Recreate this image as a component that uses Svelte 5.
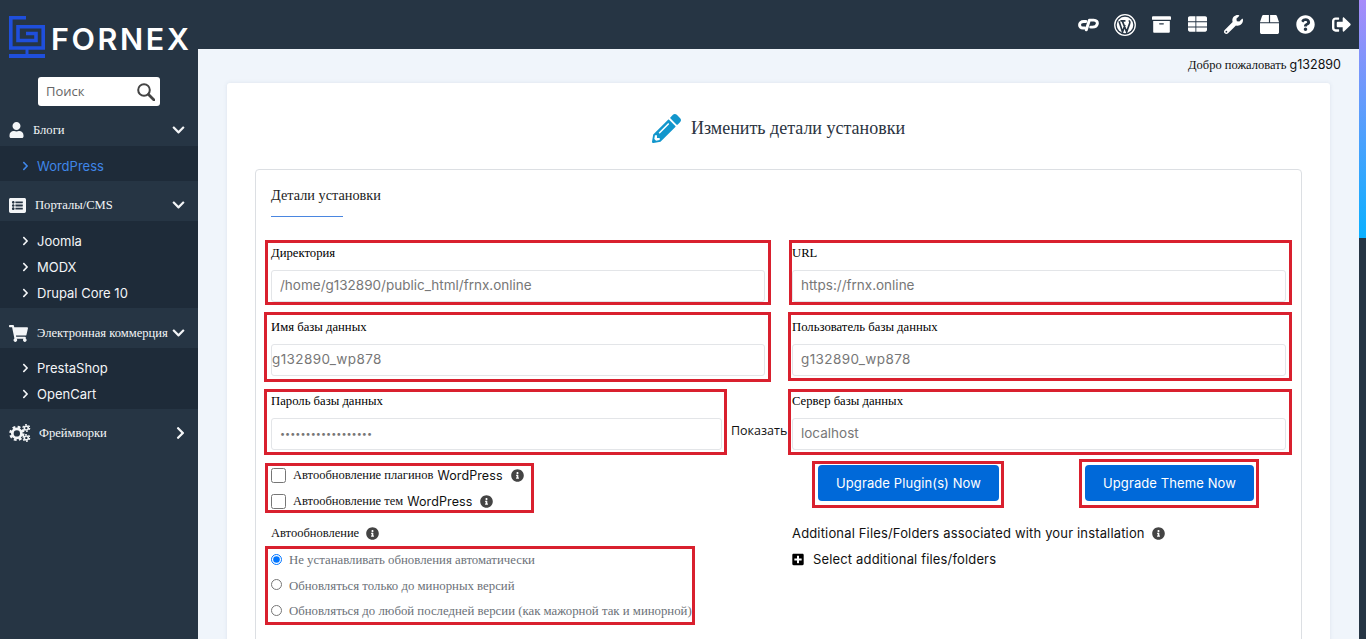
<script>
    // paths for the menu and toolbar icons
    const icons = {
        user: ["0 0 448 512", "M224 256c70.7 0 128-57.3 128-128S294.7 0 224 0 96 57.3 96 128s57.3 128 128 128zm89.6 32h-16.7c-22.2 10.2-46.9 16-72.9 16s-50.6-5.8-72.9-16h-16.7C60.2 288 0 348.2 0 422.4V464c0 26.5 21.5 48 48 48h352c26.5 0 48-21.5 48-48v-41.6c0-74.2-60.2-134.4-134.4-134.4z"],
        list: ["0 0 512 512", "M464 480H48c-26.51 0-48-21.49-48-48V80c0-26.51 21.49-48 48-48h416c26.51 0 48 21.49 48 48v352c0 26.51-21.49 48-48 48zM128 120c-22.091 0-40 17.909-40 40s17.909 40 40 40 40-17.909 40-40-17.909-40-40-40zm0 96c-22.091 0-40 17.909-40 40s17.909 40 40 40 40-17.909 40-40-17.909-40-40-40zm0 96c-22.091 0-40 17.909-40 40s17.909 40 40 40 40-17.909 40-40-17.909-40-40-40zm288-136v-32c0-6.627-5.373-12-12-12H204c-6.627 0-12 5.373-12 12v32c0 6.627 5.373 12 12 12h200c6.627 0 12-5.373 12-12zm0 96v-32c0-6.627-5.373-12-12-12H204c-6.627 0-12 5.373-12 12v32c0 6.627 5.373 12 12 12h200c6.627 0 12-5.373 12-12zm0 96v-32c0-6.627-5.373-12-12-12H204c-6.627 0-12 5.373-12 12v32c0 6.627 5.373 12 12 12h200c6.627 0 12-5.373 12-12z"],
        cart: ["0 0 576 512", "M528.12 301.319l47.273-208C578.806 78.301 567.391 64 551.99 64H159.208l-9.166-44.81C147.758 8.021 137.93 0 126.529 0H24C10.745 0 0 10.745 0 24v16c0 13.255 10.745 24 24 24h69.883l70.248 343.435C147.325 417.1 136 435.222 136 456c0 30.928 25.072 56 56 56s56-25.072 56-56c0-15.674-6.447-29.835-16.824-40h209.647C430.447 426.165 424 440.326 424 456c0 30.928 25.072 56 56 56s56-25.072 56-56c0-22.172-12.888-41.332-31.579-50.405l5.517-24.276c3.413-15.018-8.002-29.319-23.403-29.319H218.117l-6.545-32h293.145c11.206 0 20.92-7.754 23.403-18.681z"],
        down: ["0 0 448 512", "M207.029 381.476L12.686 187.132c-9.373-9.373-9.373-24.569 0-33.941l22.667-22.667c9.357-9.357 24.522-9.375 33.901-.04L224 284.505l154.745-154.021c9.379-9.335 24.544-9.317 33.901.04l22.667 22.667c9.373 9.373 9.373 24.569 0 33.941L240.971 381.476c-9.373 9.372-24.569 9.372-33.942 0z"],
        right: ["0 0 320 512", "M285.476 272.971L91.132 467.314c-9.373 9.373-24.569 9.373-33.941 0l-22.667-22.667c-9.357-9.357-9.375-24.522-.04-33.901L188.505 256 34.484 101.255c-9.335-9.379-9.317-24.544.04-33.901l22.667-22.667c9.373-9.373 24.569-9.373 33.941 0L285.475 239.03c9.373 9.372 9.373 24.568.001 33.941z"],
        info: ["0 0 512 512", "M256 8C119.043 8 8 119.083 8 256c0 136.997 111.043 248 248 248s248-111.003 248-248C504 119.083 392.957 8 256 8zm0 110c23.196 0 42 18.804 42 42s-18.804 42-42 42-42-18.804-42-42 18.804-42 42-42zm56 254c0 6.627-5.373 12-12 12h-88c-6.627 0-12-5.373-12-12v-24c0-6.627 5.373-12 12-12h12v-64h-12c-6.627 0-12-5.373-12-12v-24c0-6.627 5.373-12 12-12h64c6.627 0 12 5.373 12 12v100h12c6.627 0 12 5.373 12 12v24z"],
        archive: ["0 0 512 512", "M32 448c0 17.7 14.3 32 32 32h384c17.7 0 32-14.3 32-32V160H32v288zm160-212c0-6.6 5.4-12 12-12h104c6.6 0 12 5.4 12 12v8c0 6.6-5.4 12-12 12H204c-6.6 0-12-5.4-12-12v-8zM480 32H32C14.3 32 0 46.3 0 64v48c0 8.8 7.2 16 16 16h480c8.8 0 16-7.2 16-16V64c0-17.7-14.3-32-32-32z"],
        table: ["0 0 512 512", "M48 32h152v136H0V80c0-26.5 21.500-48 48-48zM224 32h240c26.500 0 48 21.500 48 48v88H224V32zM0 192h200v120H0V192zM224 192h288v120H224V192zM0 336h200v112H48c-26.500 0-48-21.500-48-48v-64zM224 336h288v64c0 26.500-21.500 48-48 48H224V336z"],
        wrench: ["0 0 512 512", "M507.73 109.1c-2.24-9.03-13.54-12.09-20.12-5.51l-74.36 74.36-67.88-11.31-11.31-67.88 74.36-74.36c6.62-6.62 3.43-17.9-5.66-20.16-47.38-11.74-99.55.91-136.58 37.93-39.64 39.64-50.55 97.1-34.05 147.2L18.74 402.76c-24.99 24.99-24.99 65.51 0 90.5 24.99 24.99 65.51 24.99 90.5 0l213.21-213.21c50.12 16.71 107.47 5.68 147.37-34.22 37.07-37.07 49.7-89.32 37.91-136.73zM64 472c-13.25 0-24-10.75-24-24 0-13.26 10.75-24 24-24s24 10.74 24 24c0 13.25-10.75 24-24 24z"],
        box: ["0 0 512 512", "M509.5 184.6L458.9 32.8C452.4 13.2 434.1 0 413.4 0H272v192h238.7c-.4-2.5-.4-5-1.2-7.4zM240 0H98.6c-20.7 0-39 13.2-45.5 32.8L2.5 184.6c-.8 2.4-.8 4.9-1.2 7.4H240V0zM0 224v240c0 26.5 21.5 48 48 48h416c26.5 0 48-21.5 48-48V224H0z"],
        question: ["0 0 512 512", "M504 256c0 136.997-111.043 248-248 248S8 392.997 8 256C8 119.083 119.043 8 256 8s248 111.083 248 248zM262.655 90c-54.497 0-89.255 22.957-116.549 63.758-3.536 5.286-2.353 12.415 2.715 16.258l34.699 26.31c5.205 3.947 12.621 3.008 16.665-2.122 17.864-22.658 30.113-35.797 57.303-35.797 20.429 0 45.698 13.148 45.698 32.958 0 14.976-12.363 22.667-32.534 33.976C247.128 238.528 216 254.941 216 296v4c0 6.627 5.373 12 12 12h56c6.627 0 12-5.373 12-12v-1.333c0-28.462 83.186-29.647 83.186-106.667 0-58.002-60.165-102-116.531-102zM256 338c-25.365 0-46 20.635-46 46 0 25.364 20.635 46 46 46s46-20.636 46-46c0-25.365-20.635-46-46-46z"],
        signout: ["0 0 512 512", "M497 273L329 441c-15 15-41 4.5-41-17v-96H152c-13.3 0-24-10.7-24-24v-96c0-13.3 10.7-24 24-24h136V88c0-21.4 25.9-32 41-17l168 168c9.3 9.4 9.3 24.6 0 34zM192 436v-40c0-6.6-5.4-12-12-12H96c-17.7 0-32-14.3-32-32V160c0-17.7 14.3-32 32-32h84c6.6 0 12-5.4 12-12V76c0-6.6-5.4-12-12-12H96c-53 0-96 43-96 96v192c0 53 43 96 96 96h84c6.6 0 12-5.4 12-12z"],
        pencil: ["0 0 512 512", "M497.9 142.1l-46.1 46.1c-4.7 4.7-12.3 4.7-17 0l-111-111c-4.7-4.7-4.7-12.3 0-17l46.1-46.1c18.7-18.7 49.1-18.7 67.9 0l60.1 60.1c18.8 18.7 18.8 49.1 0 67.9zM284.2 99.8L21.6 362.4.4 483.9c-2.9 16.4 11.4 30.6 27.8 27.8l121.5-21.3 262.6-262.6c4.7-4.7 4.7-12.3 0-17l-111-111c-4.8-4.7-12.4-4.7-17.1 0zM124.1 339.9c-5.5-5.5-5.5-14.3 0-19.8l154-154c5.5-5.5 14.3-5.5 19.8 0s5.5 14.3 0 19.8l-154 154c-5.5 5.5-14.3 5.5-19.8 0zM88 424h48v36.3l-64.5 11.3-31.1-31.1L51.7 376H88v48z"],
        plus: ["0 0 448 512", "M400 32H48C21.5 32 0 53.5 0 80v352c0 26.5 21.5 48 48 48h352c26.5 0 48-21.5 48-48V80c0-26.5-21.5-48-48-48zm-32 252c0 6.6-5.4 12-12 12h-92v92c0 6.6-5.4 12-12 12h-56c-6.6 0-12-5.4-12-12v-92H92c-6.6 0-12-5.4-12-12v-56c0-6.6 5.4-12 12-12h92v-92c0-6.6 5.4-12 12-12h56c6.6 0 12 5.4 12 12v92h92c6.6 0 12 5.4 12 12v56z"]
    };

    const menu = [
        { title: "Блоги", icon: "user", items: ["WordPress"], active: "WordPress" },
        { title: "Порталы/CMS", icon: "list", items: ["Joomla", "MODX", "Drupal Core 10"] },
        { title: "Электронная коммерция", icon: "cart", items: ["PrestaShop", "OpenCart"] },
        { title: "Фреймворки", icon: "cogs", items: [] }
    ];

    const toolbar = ["archive", "table", "wrench", "box", "question", "signout"];

    // annotation frames drawn over the form: left, top, right, bottom
    const frames = [
        [265, 240, 771, 305], [789, 240, 1292, 305],
        [264, 312, 771, 382], [788, 312, 1292, 381],
        [264, 389, 727, 455], [788, 389, 1292, 455],
        [265, 463, 534, 513], [265, 546, 695, 625],
        [812, 461, 1004, 508], [1079, 459, 1259, 508]
    ];
</script>

{#snippet fa(name, cls)}
    <svg class={cls} viewBox={icons[name][0]} aria-hidden="true"><path fill="currentColor" d={icons[name][1]} /></svg>
{/snippet}

<div class="page">
    <aside class="sidebar">
        <div class="logo">
            <svg class="logo-mark" viewBox="0 0 36 42" aria-hidden="true">
                <path d="M17 1.800H1.800V32H34.200V10.800H9V24.500H27V17.500H17" fill="none" stroke="#1f4fdc" stroke-width="3.600" />
                <path d="M18 32V38" stroke="#1f4fdc" stroke-width="3" />
                <path d="M0 40H36" stroke="#1f4fdc" stroke-width="4" />
            </svg>
            <span class="logo-text">FORNEX</span>
        </div>

        <div class="search">
            <span>Поиск</span>
            <svg class="search-icon" viewBox="0 0 18 18" aria-hidden="true">
                <circle cx="7" cy="7" r="5.800" fill="none" stroke="currentColor" stroke-width="2" />
                <path d="M11.500 11.500L17 17" stroke="currentColor" stroke-width="2.800" stroke-linecap="round" />
            </svg>
        </div>

        {#each menu as group}
            <div class="group-title" class:tall={group.icon === "cart"}>
                {#if group.icon === "cogs"}
                    <svg class="group-icon cogs" viewBox="0 0 24 20" aria-hidden="true">
                        <circle cx="8.500" cy="10.500" r="5" fill="none" stroke="currentColor" stroke-width="3" />
                        <circle cx="8.500" cy="10.500" r="7" fill="none" stroke="currentColor" stroke-width="3" stroke-dasharray="3 2.500" />
                        <circle cx="19" cy="4.500" r="2.200" fill="none" stroke="currentColor" stroke-width="1.800" />
                        <circle cx="19" cy="4.500" r="3.700" fill="none" stroke="currentColor" stroke-width="1.500" stroke-dasharray="2 1.900" />
                        <circle cx="19" cy="15.500" r="2.200" fill="none" stroke="currentColor" stroke-width="1.800" />
                        <circle cx="19" cy="15.500" r="3.700" fill="none" stroke="currentColor" stroke-width="1.500" stroke-dasharray="2 1.900" />
                    </svg>
                {:else}
                    {@render fa(group.icon, "group-icon " + group.icon)}
                {/if}
                <span class="group-name">{group.title}</span>
                {@render fa(group.items.length ? "down" : "right", group.items.length ? "caret" : "caret side")}
            </div>
            {#if group.items.length}
                <ul class="sub">
                    {#each group.items as item}
                        <li class:active={item === group.active}>
                            {@render fa("right", "sub-arrow")}
                            <span>{item}</span>
                        </li>
                    {/each}
                </ul>
            {/if}
        {/each}
    </aside>

    <div class="right">
        <header class="topbar">
            <svg class="tool cp" viewBox="0 0 24 16" aria-hidden="true">
                <path d="M9 4.500H6.500C3.500 4.500 1.800 6.500 1.800 8.500S3.300 12 5.500 12H7.500" fill="none" stroke="currentColor" stroke-width="3.400" stroke-linecap="round" />
                <path d="M9.500 14L13 3H18C21 3 22.500 5 22 7.500S19 11 16.500 11H14.500" fill="none" stroke="currentColor" stroke-width="3.400" stroke-linecap="round" stroke-linejoin="round" />
            </svg>
            <svg class="tool wp" viewBox="0 0 24 24" aria-hidden="true">
                <circle cx="12" cy="12" r="11.200" fill="none" stroke="currentColor" stroke-width="1.400" />
                <circle cx="12" cy="12" r="9" fill="currentColor" />
                <path d="M5.500 8L9.300 19.500L12 12M9 7.500L13.800 19.500L17 10.500C17.800 8.500 17 7.500 16 7.500M7 7.500H12.500" fill="none" stroke="#263544" stroke-width="1.800" />
            </svg>
            {#each toolbar as name}
                {@render fa(name, "tool")}
            {/each}
        </header>

        <main class="content">
            <p class="welcome"><span class="serif">Добро пожаловать</span> <span class="sans">g132890</span></p>

            <section class="card">
                <h1 class="title">
                    {@render fa("pencil", "title-icon")}
                    <span>Изменить детали установки</span>
                </h1>

                <div class="panel">
                    <h2 class="panel-title">Детали установки</h2>

                    <div class="row">
                        <div class="field">
                            <label for="dir">Директория</label>
                            <input id="dir" readonly value="/home/g132890/public_html/frnx.online" />
                        </div>
                        <div class="field">
                            <label for="url">URL</label>
                            <input id="url" readonly value="https://frnx.online" />
                        </div>
                    </div>
                    <div class="row">
                        <div class="field">
                            <label for="dbname">Имя базы данных</label>
                            <input id="dbname" class="db flush" readonly value="g132890_wp878" />
                        </div>
                        <div class="field">
                            <label for="dbuser">Пользователь базы данных</label>
                            <input id="dbuser" class="db" readonly value="g132890_wp878" />
                        </div>
                    </div>
                    <div class="row">
                        <div class="field last">
                            <label for="dbpass">Пароль базы данных</label>
                            <div class="pass">
                                <input id="dbpass" type="password" readonly value="xxxxxxxxxxxxxxxxxx" />
                                <span class="show">Показать</span>
                            </div>
                        </div>
                        <div class="field last">
                            <label for="dbhost">Сервер базы данных</label>
                            <input id="dbhost" readonly value="localhost" />
                        </div>
                    </div>

                    <div class="row updates">
                        <div class="checks">
                            <label class="check">
                                <input type="checkbox" />
                                <span class="serif">Автообновление плагинов</span> <span class="sans">WordPress</span>
                                {@render fa("info", "info")}
                            </label>
                            <label class="check">
                                <input type="checkbox" />
                                <span class="serif">Автообновление тем</span> <span class="sans">WordPress</span>
                                {@render fa("info", "info")}
                            </label>
                        </div>
                        <div class="buttons">
                            <button class="btn first">Upgrade Plugin(s) Now</button>
                            <button class="btn second">Upgrade Theme Now</button>
                        </div>
                    </div>

                    <div class="row">
                        <div>
                            <div class="line">
                                <span class="serif">Автообновление</span>
                                {@render fa("info", "info")}
                            </div>
                            <div class="radios">
                                <label class="radio"><input type="radio" name="auto" checked /> Не устанавливать обновления автоматически</label>
                                <label class="radio"><input type="radio" name="auto" /> Обновляться только до минорных версий</label>
                                <label class="radio"><input type="radio" name="auto" /> Обновляться до любой последней версии (как мажорной так и минорной)</label>
                            </div>
                        </div>
                        <div>
                            <div class="line sans extra">
                                Additional Files/Folders associated with your installation
                                {@render fa("info", "info")}
                            </div>
                            <div class="line sans extra select">
                                {@render fa("plus", "plus")}
                                Select additional files/folders
                            </div>
                        </div>
                    </div>
                </div>
            </section>
        </main>
    </div>

    <div class="scroll"><div class="thumb"></div></div>

    {#each frames as f}
        <div class="frame" style="left:{f[0]}px;top:{f[1]}px;width:{f[2] - f[0]}px;height:{f[3] - f[1]}px"></div>
    {/each}
</div>

<style>
    :global(body) {
        margin: 0;
    }

    .page {
        position: relative;
        display: flex;
        height: 639px;
        overflow: hidden;
        font-family: "Liberation Serif", serif;
        font-size: 13px;
        color: #111;
    }

    .serif {
        font-family: "Liberation Serif", serif;
    }

    .sans {
        font-family: Inter, sans-serif;
    }

    /* sidebar */
    .sidebar {
        width: 198px;
        flex: none;
        background: #263544;
        color: #f3f5f7;
    }

    .logo {
        display: flex;
        align-items: center;
        height: 77px;
        box-sizing: border-box;
        padding: 16px 0 19px 9px;
    }

    .logo-mark {
        width: 36px;
        height: 42px;
        flex: none;
    }

    .logo-text {
        margin: 3px 0 0 6px;
        font-family: Inter, sans-serif;
        font-size: 30.500px;
        font-weight: 600;
        letter-spacing: 2.600px;
        color: #fff;
    }

    .search {
        display: flex;
        align-items: center;
        justify-content: space-between;
        box-sizing: border-box;
        width: 122px;
        height: 29px;
        margin-left: 38px;
        padding: 0 5px 2px 8px;
        background: #fff;
        border-radius: 3px;
        font-family: "Open Sans", sans-serif;
        font-size: 13px;
        color: #666;
    }

    .search-icon {
        width: 18px;
        height: 18px;
        margin-top: 2px;
        color: #444;
    }

    .group-title {
        display: flex;
        align-items: center;
        box-sizing: border-box;
        height: 40px;
        padding: 8px 13px 0 9px;
        font-size: 12.600px;
    }

    .group-title.tall {
        padding-top: 10px;
    }

    .group-icon {
        flex: none;
        margin-right: 9px;
    }

    .group-icon.user {
        width: 15px;
        height: 16px;
    }

    .group-icon.list {
        width: 17px;
        height: 17px;
    }

    .group-icon.cart {
        width: 19px;
        height: 17px;
    }

    .group-icon.cogs {
        width: 22px;
        height: 18px;
        margin-right: 8px;
    }

    .group-name {
        flex: 1;
        white-space: nowrap;
    }

    .caret {
        width: 13px;
        height: 14px;
        flex: none;
    }

    .caret.side {
        margin-right: -2px;
    }

    .sub {
        margin: 0;
        padding: 7px 0 2px;
        list-style: none;
        background: #1e2b39;
        font-family: Inter, sans-serif;
        font-size: 13px;
    }

    .sub li {
        display: flex;
        align-items: center;
        height: 26px;
        padding-left: 22px;
    }

    .sub li.active {
        color: #3f86e8;
    }

    .sub-arrow {
        width: 7px;
        height: 10px;
        margin-right: 8px;
    }

    /* top bar and content */
    .right {
        flex: 1;
        min-width: 0;
    }

    .topbar {
        display: flex;
        align-items: center;
        justify-content: flex-end;
        gap: 17px;
        box-sizing: border-box;
        height: 49px;
        padding: 0 15px 0 0;
        background: #263544;
        color: #fff;
    }

    .tool {
        width: 19px;
        height: 19px;
    }

    .cp {
        width: 21px;
        margin-right: -2px;
    }

    .wp {
        width: 22px;
        height: 22px;
        margin-right: -1px;
    }

    .content {
        height: 590px;
        padding: 0 36px 0 29px;
        background: #f0f5fb;
    }

    .welcome {
        margin: 0 -11px 0 0;
        height: 34px;
        padding-top: 8px;
        box-sizing: border-box;
        text-align: right;
        font-size: 12.500px;
    }

    .card {
        height: 700px;
        padding: 0 28px;
        background: #fff;
        border-radius: 3px;
        box-shadow: 0 0 4px rgba(80, 100, 130, 0.12);
    }

    .title {
        display: flex;
        align-items: center;
        justify-content: center;
        gap: 10px;
        box-sizing: border-box;
        height: 86px;
        margin: 0;
        padding-top: 4px;
        font-size: 18px;
        font-weight: 400;
        color: #2b3441;
    }

    .title-icon {
        width: 29px;
        height: 29px;
        color: #1296cc;
    }

    .panel {
        height: 600px;
        padding: 0 15px;
        border: 1px solid #dcdfe3;
        border-radius: 4px;
    }

    .panel-title {
        height: 47px;
        margin: 0 0 25px;
        padding-top: 17px;
        box-sizing: border-box;
        font-size: 14.300px;
        font-weight: 400;
        white-space: nowrap;
        color: #222;
    }

    .panel-title::after {
        content: "";
        display: block;
        width: 72px;
        height: 1px;
        margin-top: 12px;
        background: #4a86e0;
    }

    .row {
        display: grid;
        grid-template-columns: 494px 494px;
        column-gap: 27px;
    }

    .field {
        margin-bottom: 14px;
    }

    .field.last {
        margin-bottom: 11px;
    }

    .field label {
        display: block;
        height: 21px;
        margin-bottom: 7px;
        line-height: 23px;
        font-size: 12.700px;
        color: #000;
    }

    input:not([type="checkbox"], [type="radio"]) {
        display: block;
        box-sizing: border-box;
        width: 100%;
        height: 32px;
        padding: 0 8px 2px;
        background: #fff;
        border: 1px solid #e3e5e8;
        border-radius: 3px;
        outline: none;
        font-family: Inter, sans-serif;
        font-size: 13.500px;
        color: #777;
    }

    input.db:not([type="checkbox"], [type="radio"]) {
        letter-spacing: 0.400px;
    }

    input.flush:not([type="checkbox"], [type="radio"]) {
        padding-left: 0;
    }

    .pass {
        display: flex;
        align-items: center;
    }

    .pass input:not([type="checkbox"], [type="radio"]) {
        width: 451px;
        flex: none;
        font-size: 9.100px;
    }

    .show {
        margin: -7px 0 0 9px;
        font-family: "Open Sans", sans-serif;
        font-size: 12.500px;
        white-space: nowrap;
    }

    .updates {
        height: 61px;
    }

    .checks {
        padding-top: 1px;
    }

    .check {
        display: flex;
        align-items: center;
        gap: 4px;
        height: 26px;
        font-size: 12.500px;
    }

    .check input {
        width: 15px;
        height: 15px;
        margin: 0 3px 0 0;
    }

    .check .sans {
        letter-spacing: 0.100px;
    }

    .info {
        width: 13px;
        height: 13px;
        margin-left: 3px;
        color: #444;
    }

    .check .info {
        margin-left: 4px;
    }

    .buttons {
        display: flex;
        align-items: flex-start;
        padding-top: 4px;
    }

    .btn {
        height: 36px;
        padding: 0;
        background: #0069d9;
        border: none;
        border-radius: 4px;
        font-family: Inter, sans-serif;
        font-size: 13px;
        letter-spacing: 0.100px;
        color: #fff;
    }

    .first {
        width: 181px;
        margin-left: 26px;
    }

    .second {
        width: 169px;
        margin-left: 86px;
    }

    .line {
        display: flex;
        align-items: center;
        gap: 4px;
        height: 22px;
        font-size: 12.500px;
    }

    .extra {
        font-size: 13px;
        letter-spacing: 0.160px;
    }

    .select {
        margin-top: 4px;
    }

    .plus {
        width: 12px;
        height: 13px;
        margin-right: 5px;
        color: #000;
    }

    .radios {
        padding-top: 4px;
    }

    .radio {
        display: flex;
        align-items: center;
        gap: 7px;
        height: 25.500px;
        font-size: 12.800px;
        color: #6b7178;
        white-space: nowrap;
    }

    .radio input {
        width: 11px;
        height: 11px;
        margin: -3px 0 0;
    }

    /* scrollbar */
    .scroll {
        position: absolute;
        top: 0;
        right: 0;
        bottom: 0;
        width: 7px;
        background: #263544;
    }

    .thumb {
        height: 238px;
        background: linear-gradient(#a78bfa, #0ab0ff);
    }

    /* red annotation frames */
    .frame {
        position: absolute;
        box-sizing: border-box;
        border: 3px solid #d9202e;
    }
</style>
